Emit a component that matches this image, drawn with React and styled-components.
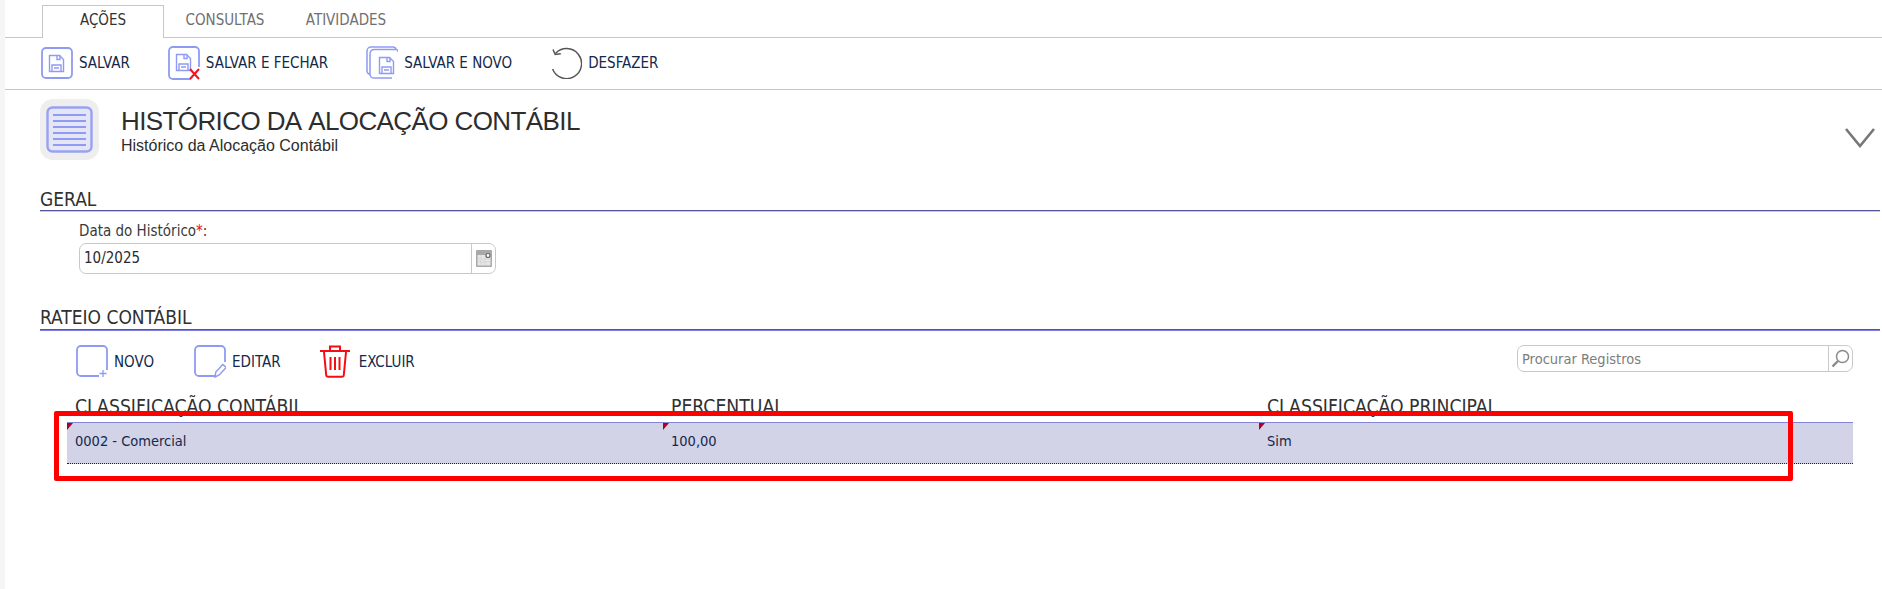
import React from 'react';
import styled, { createGlobalStyle } from 'styled-components';

const GlobalStyle = createGlobalStyle`
  html, body {
    margin: 0;
    padding: 0;
    background: #fff;
  }
  body {
    font-family: "DejaVu Sans Condensed", "Noto Sans", sans-serif;
  }
`;

const Page = styled.div`
  position: relative;
  display: flex;
  width: 1882px;
  height: 589px;
  overflow: hidden;
  background: #fff;
`;

const Rail = styled.div`
  width: 5px;
  flex: none;
  background: #f5f5f5;
`;

const Main = styled.div`
  flex: 1;
  min-width: 0;
`;

const TabBar = styled.div`
  display: flex;
  height: 38px;
  box-sizing: border-box;
  padding: 5px 0 0 37px;
  border-bottom: 1px solid #c6c6c6;
`;

const Tab = styled.div`
  box-sizing: border-box;
  width: ${(p) => p.$width}px;
  height: ${(p) => (p.$active ? 33 : 32)}px;
  padding-top: ${(p) => (p.$active ? 6 : 7)}px;
  font-size: 15px;
  line-height: 17px;
  text-align: center;
  background: #fff;
  color: ${(p) => (p.$active ? '#333' : '#707070')};
  border: ${(p) => (p.$active ? '1px solid #c6c6c6' : '0')};
  border-bottom: 0;
`;

const ActionBar = styled.div`
  display: flex;
  align-items: center;
  height: 52px;
  box-sizing: border-box;
  padding: 0 0 2px 36px;
  border-bottom: 1px solid #c6c6c6;
`;

const Action = styled.div`
  display: flex;
  align-items: center;
  gap: ${(p) => p.$gap || 6}px;
  margin-right: ${(p) => p.$after || 0}px;
  font-size: 15px;
  color: #14284b;
  white-space: nowrap;
`;

const Header = styled.div`
  display: flex;
  align-items: flex-start;
  box-sizing: border-box;
  height: 80px;
  padding: 9px 7px 0 35px;
`;

const HeaderIcon = styled.div`
  display: flex;
  align-items: center;
  justify-content: center;
  width: 59px;
  height: 61px;
  flex: none;
  border-radius: 13px;
  background: #eeeeee;
`;

const HeaderText = styled.div`
  flex: 1;
  margin-left: 22px;
  padding-top: 7px;
  font-family: "Liberation Sans", Arial, sans-serif;
  color: #2d2d2d;
`;

const Title = styled.div`
  font-size: 26px;
  line-height: 30px;
  letter-spacing: -0.6px;
  font-kerning: none;
`;

const Subtitle = styled.div`
  font-size: 16px;
  line-height: 16px;
  margin-top: 2px;
`;

const Chevron = styled.div`
  margin-top: 29px;
`;

const Section = styled.section`
  padding: 0 2px 0 35px;
`;

const SectionTitle = styled.div`
  box-sizing: border-box;
  height: ${(p) => p.$height}px;
  padding-top: ${(p) => p.$top}px;
  font-size: 19px;
  line-height: 20px;
  color: #303030;
  border-bottom: 1px solid #55559a;
  box-shadow: 0 1px 0 ${(p) => p.$under};
`;

const Field = styled.div`
  padding: 12px 0 0 39px;
  height: 80px;
  box-sizing: border-box;
`;

const Label = styled.div`
  margin-bottom: 3px;
  font-size: 15px;
  line-height: 17px;
  color: #3a3a3a;
  span {
    color: #e0101a;
  }
`;

const InputBox = styled.div`
  display: flex;
  box-sizing: border-box;
  width: ${(p) => p.$width}px;
  height: ${(p) => p.$height}px;
  border: 1px solid #c9c9c9;
  border-radius: 7px;
  font-size: ${(p) => (p.$placeholder ? 14.5 : 15)}px;
  color: ${(p) => (p.$placeholder ? '#7d7d7d' : '#2c2c2c')};
`;

const InputText = styled.div`
  flex: 1;
  padding-left: 4px;
  line-height: ${(p) => p.$line}px;
`;

const InputAddon = styled.div`
  display: flex;
  align-items: center;
  justify-content: center;
  width: ${(p) => p.$width}px;
  flex: none;
  border-left: 1px solid #c9c9c9;
`;

const GridBar = styled.div`
  display: flex;
  align-items: flex-start;
  height: 48px;
  box-sizing: border-box;
  padding: 15px 27px 0 36px;
`;

const GridActions = styled.div`
  display: flex;
  flex: 1;
`;

const Grid = styled.div`
  width: 1786px;
  margin-left: 27px;
`;

const HeadRow = styled.div`
  display: grid;
  grid-template-columns: 596px 596px 594px;
  height: 44px;
  box-sizing: border-box;
  padding-top: 19px;
`;

const HeadCell = styled.div`
  padding-left: 8px;
  font-size: 19.2px;
  line-height: 20px;
  color: #303030;
`;

const DataRow = styled.div`
  display: grid;
  grid-template-columns: 596px 596px 594px;
  height: 42px;
  box-sizing: border-box;
  background: #d2d3e7;
  border-top: 1px solid #8484d8;
  border-bottom: 1px dotted #222;
`;

const DataCell = styled.div`
  position: relative;
  padding-left: 8px;
  font-size: 14.5px;
  line-height: 37px;
  color: #14284b;
  &::before {
    content: '';
    position: absolute;
    left: 0;
    top: 0;
    border-top: 7px solid #b00020;
    border-right: 6px solid transparent;
  }
`;

// the red highlight that was drawn over the screenshot
const Highlight = styled.div`
  position: absolute;
  left: 54px;
  top: 411px;
  width: 1739px;
  height: 70px;
  box-sizing: border-box;
  border: 5px solid #ff0000;
  border-radius: 2px;
  pointer-events: none;
`;

const BLUE = '#8f9bf3';

function Floppy({ x = 0, y = 0 }) {
  return (
    <g transform={`translate(${x} ${y})`} fill="none" stroke={BLUE} strokeWidth="1.4">
      <path d="M8.5 8.5h10l4 4v12h-14z" />
      <path d="M16 8.5v4h3v-4" />
      <path d="M11 24.5v-6.5h9v6.5M13 21h5" />
    </g>
  );
}

function SaveIcon() {
  return (
    <svg width="32" height="32" viewBox="0 0 32 32">
      <rect x="1" y="1" width="30" height="30" rx="4" fill="none" stroke={BLUE} strokeWidth="1.8" />
      <Floppy />
    </svg>
  );
}

function SaveCloseIcon() {
  return (
    <svg width="32" height="34" viewBox="0 0 32 34" style={{ overflow: 'visible' }}>
      <path d="M31 21V5a4 4 0 0 0-4-4H5a4 4 0 0 0-4 4v24a4 4 0 0 0 4 4h18" fill="none" stroke={BLUE} strokeWidth="1.8" />
      <Floppy />
      <path d="M22 23l9 10M31 23l-9 10" stroke="#f0141e" strokeWidth="2" fill="none" />
    </svg>
  );
}

function SaveNewIcon() {
  return (
    <svg width="32" height="33" viewBox="0 0 32 33">
      <path d="M30 3.5a3 3 0 0 0-3-2.5H5a4 4 0 0 0-4 4v20a4 4 0 0 0 3 3.5" fill="none" stroke={BLUE} strokeWidth="1.5" />
      <path d="M32 6v-1a2 2 0 0 0-2-1.5H8a4 4 0 0 0-4 4v21a4 4 0 0 0 4 3.5h18" fill="none" stroke={BLUE} strokeWidth="1.5" />
      <Floppy x="5" y="3" />
    </svg>
  );
}

function UndoIcon() {
  return (
    <svg width="32" height="33" viewBox="0 0 32 33">
      <path d="M5.5 7.5A15 15 0 1 1 2.6 23" fill="none" stroke="#555" strokeWidth="1.5" />
      <path d="M3 3.5l2.2 5 5.6-.8" fill="none" stroke="#555" strokeWidth="1.5" />
    </svg>
  );
}

function NewIcon() {
  return (
    <svg width="32" height="33" viewBox="0 0 32 33">
      <path d="M31 25V5a4 4 0 0 0-4-4H5a4 4 0 0 0-4 4v22a4 4 0 0 0 4 4h18" fill="none" stroke={BLUE} strokeWidth="1.8" />
      <path d="M27 25v7M23.5 28.5h7" fill="none" stroke={BLUE} strokeWidth="1.3" />
    </svg>
  );
}

function EditIcon() {
  return (
    <svg width="32" height="33" viewBox="0 0 32 33">
      <path d="M31 17V5a4 4 0 0 0-4-4H5a4 4 0 0 0-4 4v22a4 4 0 0 0 4 4h16" fill="none" stroke={BLUE} strokeWidth="1.8" />
      <path d="M21 32l.8-5 7-7.5 3.4 3-7 7.5z" fill="none" stroke={BLUE} strokeWidth="1.5" />
    </svg>
  );
}

function TrashIcon() {
  return (
    <svg width="30" height="33" viewBox="0 0 30 33">
      <g fill="none" stroke="#f50c14" strokeWidth="2">
        <path d="M0 6h30M10 5.5V1.5h10v4" />
        <path d="M4 7l2.2 23a2 2 0 0 0 2 1.8h13.6a2 2 0 0 0 2-1.8L26 7" />
      </g>
      <path d="M10.5 12v13M15 12v13M19.5 12v13" stroke="#f50c14" strokeWidth="2" />
    </svg>
  );
}

function ListIcon() {
  return (
    <svg width="47" height="47" viewBox="0 0 47 47">
      <rect x="1.5" y="1.5" width="44" height="44" rx="5" fill="#e4e5f6" stroke="#98a2f0" strokeWidth="2.4" />
      <path d="M7 9h33M7 15h33M7 21h33M7 27h33M7 33h33M7 39h33" stroke="#8f9bf3" strokeWidth="1.8" />
    </svg>
  );
}

function ChevronIcon() {
  return (
    <svg width="30" height="20" viewBox="0 0 30 20">
      <path d="M1 1l14 17L29 1" fill="none" stroke="#777" strokeWidth="2.6" />
    </svg>
  );
}

function CalendarIcon() {
  return (
    <svg width="16" height="17" viewBox="0 0 16 17">
      <rect width="16" height="17" rx="1" fill="#a9a9a9" />
      <rect x="1.5" y="5" width="13" height="10.5" fill="#e6e6e6" />
      <path d="M5 5v10M9 5v10M1.5 9h13M1.5 12h13" stroke="#d0d0d0" strokeWidth="0.7" />
      <circle cx="12" cy="5.5" r="2" fill="#fff" stroke="#666" strokeWidth="1.2" />
    </svg>
  );
}

function SearchIcon() {
  return (
    <svg width="19" height="19" viewBox="0 0 19 19">
      <circle cx="11.5" cy="7.5" r="6" fill="none" stroke="#8a8a8a" strokeWidth="1.5" />
      <path d="M7 12l-5.5 5.5" stroke="#8a8a8a" strokeWidth="2.4" />
    </svg>
  );
}

export default function App() {
  return (
    <Page>
      <GlobalStyle />
      <Rail />
      <Main>
        <TabBar>
          <Tab $active $width={122}>AÇÕES</Tab>
          <Tab $width={122}>CONSULTAS</Tab>
          <Tab $width={120}>ATIVIDADES</Tab>
        </TabBar>

        <ActionBar>
          <Action $after={38}><SaveIcon />SALVAR</Action>
          <Action $after={38}><SaveCloseIcon />SALVAR E FECHAR</Action>
          <Action $after={38}><SaveNewIcon />SALVAR E NOVO</Action>
          <Action><UndoIcon />DESFAZER</Action>
        </ActionBar>

        <Header>
          <HeaderIcon><ListIcon /></HeaderIcon>
          <HeaderText>
            <Title>HISTÓRICO DA ALOCAÇÃO CONTÁBIL</Title>
            <Subtitle>Histórico da Alocação Contábil</Subtitle>
          </HeaderText>
          <Chevron><ChevronIcon /></Chevron>
        </Header>

        <Section>
          <SectionTitle $height={41} $top={19} $under="#c9c9ee">GERAL</SectionTitle>
          <Field>
            <Label>Data do Histórico<span>*</span>:</Label>
            <InputBox $width={417} $height={31}>
              <InputText $line={29}>10/2025</InputText>
              <InputAddon $width={23}><CalendarIcon /></InputAddon>
            </InputBox>
          </Field>
        </Section>

        <Section>
          <SectionTitle $height={39} $top={16} $under="#7d7de0">RATEIO CONTÁBIL</SectionTitle>
          <GridBar>
            <GridActions>
              <Action $after={40}><NewIcon />NOVO</Action>
              <Action $after={39}><EditIcon />EDITAR</Action>
              <Action $gap={9}><TrashIcon />EXCLUIR</Action>
            </GridActions>
            <InputBox $width={336} $height={27} $placeholder>
              <InputText $line={26}>Procurar Registros</InputText>
              <InputAddon $width={23}><SearchIcon /></InputAddon>
            </InputBox>
          </GridBar>
          <Grid>
            <HeadRow>
              <HeadCell>CLASSIFICAÇÃO CONTÁBIL</HeadCell>
              <HeadCell>PERCENTUAL</HeadCell>
              <HeadCell>CLASSIFICAÇÃO PRINCIPAL</HeadCell>
            </HeadRow>
            <DataRow>
              <DataCell>0002 - Comercial</DataCell>
              <DataCell>100,00</DataCell>
              <DataCell>Sim</DataCell>
            </DataRow>
          </Grid>
        </Section>
      </Main>
      <Highlight />
    </Page>
  );
}
